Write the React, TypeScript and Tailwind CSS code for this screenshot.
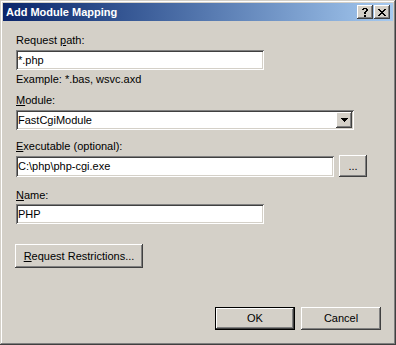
const FACE = "bg-[#d4d0c8]";
const raised =
  "shadow-[inset_-1px_-1px_0_#404040,inset_1px_1px_0_#ffffff,inset_-2px_-2px_0_#808080,inset_2px_2px_0_#d4d0c8]";
const sunken =
  "shadow-[inset_1px_1px_0_#808080,inset_-1px_-1px_0_#ffffff,inset_2px_2px_0_#404040,inset_-2px_-2px_0_#d4d0c8]";

function Pixels({ rows, w, h }: { rows: string[]; w: number; h: number }) {
  return (
    <svg width={w} height={h} viewBox={`0 0 ${w} ${h}`} shapeRendering="crispEdges">
      {rows.flatMap((r, y) =>
        r.split("").map((c, x) => (c === "X" ? <rect key={`${x}-${y}`} x={x} y={y} width={1} height={1} fill="#000" /> : null))
      )}
    </svg>
  );
}

const closeGlyph = ["XX....XX", ".XX..XX.", "..XXXX..", "...XX...", "..XXXX..", ".XX..XX.", "XX....XX"];
const helpGlyph = [".XXXX.", "XX..XX", "....XX", "...XX.", "..XX..", "..XX..", "......", "..XX..", "..XX.."];
const arrowGlyph = ["XXXXXXX", ".XXXXX.", "..XXX..", "...X..."];

function Label({ pre, u, post, className = "" }: { pre?: string; u: string; post: string; className?: string }) {
  return (
    <div className={`text-[11px] leading-[13px] text-black ${className}`}>
      {pre}
      <span className="underline underline-offset-[1px]">{u}</span>
      {post}
    </div>
  );
}

function TextBox({ value, className = "" }: { value: string; className?: string }) {
  return (
    <div className={`flex items-center bg-white pl-[2px] text-[11px] text-black ${sunken} ${className}`}>{value}</div>
  );
}

function Button({ children, className = "", def = false }: { children: React.ReactNode; className?: string; def?: boolean }) {
  if (def) {
    return (
      <div className={`border border-black ${className}`}>
        <div className={`flex h-full w-full items-center justify-center ${FACE} text-[11px] text-black ${raised}`}>{children}</div>
      </div>
    );
  }
  return (
    <div className={`flex items-center justify-center ${FACE} text-[11px] text-black ${raised} ${className}`}>{children}</div>
  );
}

export default function App() {
  return (
    <div
      className={`flex h-[345px] w-[396px] flex-col ${FACE} p-[3px] shadow-[inset_-1px_-1px_0_#404040,inset_1px_1px_0_#d4d0c8,inset_-2px_-2px_0_#808080,inset_2px_2px_0_#ffffff]`}
      style={{ fontFamily: '"Liberation Sans", Arial, sans-serif' }}
    >
      <div className="flex h-[18px] items-center bg-gradient-to-r from-[#0a246a] to-[#a6caf0] pl-[3px] pr-[3px]">
        <span className="flex-1 text-[11px] font-bold text-white">Add Module Mapping</span>
        <div className={`flex h-[14px] w-[16px] items-center justify-center ${FACE} ${raised}`}>
          <Pixels rows={helpGlyph} w={6} h={9} />
        </div>
        <div className={`ml-[1px] flex h-[14px] w-[16px] items-center justify-center ${FACE} ${raised}`}>
          <Pixels rows={closeGlyph} w={8} h={7} />
        </div>
      </div>

      <div className="flex flex-1 flex-col pl-[13px]">
        <Label className="mt-[13px]" pre="Request " u="p" post="ath:" />
        <TextBox className="mt-[3px] h-[20px] w-[248px]" value="*.php" />
        <div className="mt-[3px] text-[11px] leading-[13px] text-black">Example: *.bas, wsvc.axd</div>

        <Label className="mt-[8px]" u="M" post="odule:" />
        <div className={`mt-[3px] flex h-[20px] w-[338px] items-center bg-white pl-[2px] pr-[2px] text-[11px] text-black ${sunken}`}>
          <span className="flex-1">FastCgiModule</span>
          <div className={`flex h-[16px] w-[16px] items-center justify-center ${FACE} ${raised}`}>
            <Pixels rows={arrowGlyph} w={7} h={4} />
          </div>
        </div>

        <Label className="mt-[10px]" u="E" post="xecutable (optional):" />
        <div className="mt-[2px] flex items-start">
          <TextBox className="mt-[1px] h-[21px] w-[318px]" value="C:\php\php-cgi.exe" />
          <Button className="ml-[5px] h-[22px] w-[28px]">...</Button>
        </div>

        <Label className="mt-[12px]" u="N" post="ame:" />
        <TextBox className="mt-[2px] h-[20px] w-[248px]" value="PHP" />

        <Button className="mt-[20px] h-[24px] w-[128px] -ml-[1px]">
          <span>
            <span className="underline underline-offset-[1px]">R</span>equest Restrictions...
          </span>
        </Button>

        <div className="mt-auto mb-[12px] flex">
          <Button def className="ml-[199px] h-[23px] w-[80px]">OK</Button>
          <Button className="ml-[6px] h-[23px] w-[80px]">Cancel</Button>
        </div>
      </div>
    </div>
  );
}
